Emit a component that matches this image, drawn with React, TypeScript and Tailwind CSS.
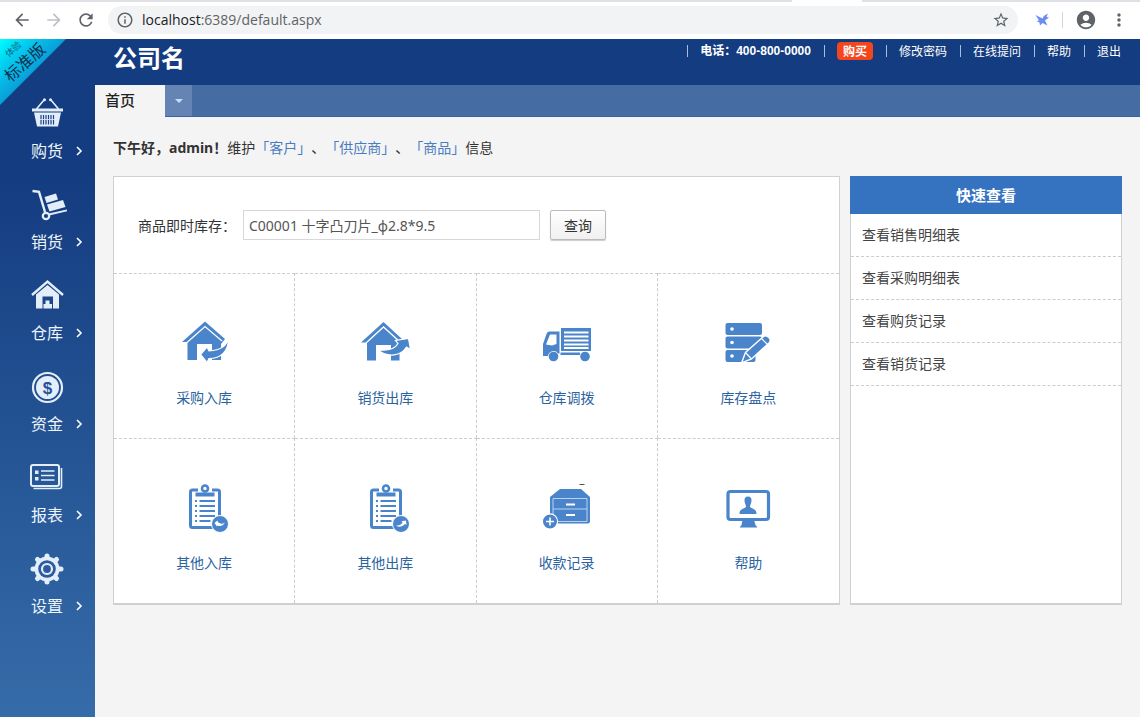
import React, { useState } from "react";

// Icons
import {
  MdArrowBack,
  MdArrowForward,
  MdRefresh,
  MdInfoOutline,
  MdStarBorder,
  MdAccountCircle,
  MdMoreVert,
} from "react-icons/md";

const BasketIcon = () => (
  <svg viewBox="0 0 40 36" className="w-10 h-9">
    <path d="M9.5 14 17 5M31.5 14 24 5" stroke="#e4eefb" strokeWidth="1.6" />
    <circle cx="17.5" cy="4.8" r="1.5" fill="#e4eefb" />
    <circle cx="23.5" cy="4.8" r="1.5" fill="#e4eefb" />
    <path d="M5 13.5h31v3H5zM7 17.5h27l-3 14H10z" fill="#e4eefb" />
    <path
      d="M14 20v9.500M16.500 20v9.500M19 20v9.500M21.500 20v9.500M24 20v9.500M26.500 20v9.500"
      stroke="#1b438a"
      strokeWidth="1.200"
    />
    <path d="M12.500 24.500h15.500" stroke="#e4eefb" strokeWidth="0.800" />
  </svg>
);

const TrolleyIcon = () => (
  <svg viewBox="0 0 40 36" className="w-10 h-9">
    <path d="M5.500 5 12 5.800 18 26" fill="none" stroke="#e4eefb" strokeWidth="2.400" />
    <path d="M22 28.500 40 24.300" stroke="#e4eefb" strokeWidth="1.800" />
    <circle cx="19" cy="30" r="3.200" fill="none" stroke="#e4eefb" strokeWidth="2.200" />
    <path d="m17.500 11 11.500-3.500 2 6-11.500 3.500z" fill="#e4eefb" />
    <path d="m20 18.500 16-4.500 2.500 7-16 4.500z" fill="#e4eefb" />
  </svg>
);

const WarehouseIcon = () => (
  <svg viewBox="0 0 40 36" className="w-10 h-9">
    <path d="M5 18 20.500 4.500 36 18" fill="none" stroke="#e4eefb" strokeWidth="2.400" />
    <path
      d="M9 17.500 20.500 8 32 17.500V31.500H26V19.500H15.500V31.500H9z"
      fill="#e4eefb"
    />
    <path d="M18.500 23.500h4v3.500h2.500v4.500h-8.500v-4.500h2z" fill="#e4eefb" />
  </svg>
);

const CoinIcon = () => (
  <svg viewBox="0 0 40 36" className="w-10 h-9">
    <circle cx="20.500" cy="19.500" r="14.500" fill="none" stroke="#e4eefb" strokeWidth="2.200" />
    <circle cx="20.500" cy="19.500" r="11.500" fill="#e4eefb" />
    <text
      x="20.500"
      y="25.500"
      textAnchor="middle"
      fill="#24529a"
      className="font-['Liberation_Sans',sans-serif] text-[17px] font-bold"
    >
      $
    </text>
  </svg>
);

const ReportIcon = () => (
  <svg viewBox="0 0 40 36" className="w-10 h-9">
    <path d="M34.500 9v18.500a2 2 0 0 1-2 2H6.500" fill="none" stroke="#e4eefb" strokeWidth="1.600" />
    <rect x="4" y="6" width="28" height="21" rx="2" fill="none" stroke="#e4eefb" strokeWidth="2" />
    <path d="M8 11.500h3.500V15H8zM8 18h3.500v3.500H8z" fill="#e4eefb" />
    <path
      d="M14 12h13.500M14 16.500h13.500M14 21h13.500"
      stroke="#e4eefb"
      strokeWidth="1.300"
    />
  </svg>
);

const GearIcon = () => (
  <svg viewBox="0 0 40 36" className="w-10 h-9">
    <g stroke="#e4eefb" strokeWidth="5" strokeLinecap="round">
      <path d="M20 6v26M6 19h28M10.500 9.500l19 19M29.500 9.500l-19 19" />
    </g>
    <circle cx="20" cy="19" r="12.500" fill="#e4eefb" />
    <circle cx="20" cy="19" r="8.800" fill="#2c5c9f" />
    <circle cx="20" cy="19" r="5" fill="none" stroke="#e4eefb" strokeWidth="2.200" />
  </svg>
);

const HouseInIcon = () => (
  <svg viewBox="0 0 52 50" className="w-[52px] h-[50px]">
    <path d="M4 24 27 3.500 47 21 43 26V42H34V26H19V42H9.500V24z" fill="#4a84cb" />
    <path d="M9 24.500 27 8.500 44 23" fill="none" stroke="#fff" strokeWidth="1.300" />
    <path
      d="M50.500 19.500C49 29 41 32.500 31 33L29 29 22.500 36.500 29 44.500 31 40.500C43 40.500 51 33 50.500 19.500z"
      fill="#4a84cb"
      stroke="#fff"
      strokeWidth="1.200"
    />
  </svg>
);

const HouseOutIcon = () => (
  <svg viewBox="0 0 52 50" className="w-[52px] h-[50px]">
    <path d="M2 24.500 24.500 4 43 21 40.500 26V42.500H32V27H17V42.500H8V24.500z" fill="#4a84cb" />
    <path d="M7 25 24.500 9 41 24" fill="none" stroke="#fff" strokeWidth="1.300" />
    <path
      d="M19 32C29 33 36 31 39 25.500L36.500 22.500 49.500 20.500 51.500 31.500 47.500 29C42 38 29 40 19 32z"
      fill="#4a84cb"
      stroke="#fff"
      strokeWidth="1.200"
    />
  </svg>
);

const TruckIcon = () => (
  <svg viewBox="0 0 52 50" className="w-[52px] h-[50px]">
    <rect x="20" y="10" width="30" height="23" fill="#4a84cb" />
    <path
      d="M23 14.500h24.500M23 18.500h24.500M23 22.500h24.500M23 26.500h24.500M23 30h24.500"
      stroke="#fff"
      strokeWidth="2"
    />
    <path d="M8 13.500H18.500V35.500H17A5.500 5.500 0 0 0 7 38H2V26L5.500 16Q6.200 13.500 8 13.500z" fill="#4a84cb" />
    <path d="M9 16.500H15.500V26L11 27.500 5 26.500z" fill="#fff" />
    <path d="M19.500 34.500h19.500v2.500h-19.500z" fill="#4a84cb" />
    <circle cx="12.500" cy="38.500" r="4.800" fill="#4a84cb" />
    <circle cx="44" cy="38.500" r="4.800" fill="#4a84cb" />
  </svg>
);

const StockIcon = () => (
  <svg viewBox="0 0 52 50" className="w-[52px] h-[50px]">
    <g fill="#4a84cb">
      <rect x="3.500" y="5" width="36.500" height="12" rx="2" />
      <rect x="3.500" y="18.500" width="36.500" height="12" rx="2" />
      <rect x="3.500" y="32" width="30" height="12" rx="2" />
    </g>
    <g fill="#fff">
      <circle cx="10" cy="11" r="1.800" />
      <circle cx="10" cy="24.500" r="1.800" />
      <circle cx="10" cy="38" r="1.800" />
    </g>
    <path
      d="M19.500 45 23.500 34.500 41.500 18.500Q44 16.500 47 19.500 49.500 22.500 47 25L29.500 41z"
      fill="#4a84cb"
      stroke="#fff"
      strokeWidth="1.400"
    />
    <path d="M23.500 34.500 29.500 41M39.500 20.500 45.500 26.500" stroke="#fff" strokeWidth="1.200" />
  </svg>
);

const Clipboard: React.FC<{ children: React.ReactNode }> = ({ children }) => (
  <svg viewBox="0 0 52 50" className="w-[52px] h-[50px]">
    <path
      d="M20 7H14.500Q12.500 7 12.500 9V42.500Q12.500 44.500 14.500 44.500H39.500Q41.500 44.500 41.500 42.500V9Q41.500 7 39.500 7H34"
      fill="none"
      stroke="#4a84cb"
      strokeWidth="3"
    />
    <circle cx="27" cy="5.500" r="3" fill="none" stroke="#4a84cb" strokeWidth="2.600" />
    <path d="M17.500 9.500h19v4h-19z" fill="#4a84cb" />
    <path
      d="M21.500 18h15.500M21.500 23h15.500M21.500 28h15.500M21.500 33h15.500M21.500 38h11"
      stroke="#4a84cb"
      strokeWidth="1.800"
    />
    <path
      d="M17 18h2M17 23h2M17 28h2M17 33h2M17 38h2"
      stroke="#4a84cb"
      strokeWidth="1.800"
    />
    <circle cx="42" cy="41" r="8.500" fill="#4a84cb" stroke="#fff" strokeWidth="1" />
    {children}
  </svg>
);

const ClipInIcon = () => (
  <Clipboard>
    <path d="M36.500 40 39.500 37.500 40 39.300Q43.500 42 47 39.500 44 44.500 39.500 42.500L39 43.500z" fill="#fff" />
  </Clipboard>
);

const ClipOutIcon = () => (
  <Clipboard>
    <path d="M37 42.500Q41.500 43 43.500 39.500L42.500 38.300 47 37.500 47.500 42 46 41Q42 45.500 37 42.500z" fill="#fff" />
  </Clipboard>
);

const CabinetIcon = () => (
  <svg viewBox="0 0 52 50" className="w-[52px] h-[50px]">
    <path d="M19 6H40L49 14V38.500Q49 40.500 47 40.500H11Q9 40.500 9 38.500V14z" fill="#4a84cb" />
    <path
      d="M12 15.500H46V38.500H12zM12 26H46"
      fill="none"
      stroke="#b9d2ef"
      strokeWidth="1"
    />
    <path d="M25 21.500h9M25 32h9" stroke="#fff" strokeWidth="2" />
    <path d="M38.500 1.500h5" stroke="#555" strokeWidth="1" />
    <circle cx="9" cy="38.500" r="7.600" fill="#4a84cb" stroke="#fff" strokeWidth="1.200" />
    <path d="M5 38.500h8M9 34.500v8" stroke="#fff" strokeWidth="1.600" />
  </svg>
);

const MonitorIcon = () => (
  <svg viewBox="0 0 52 50" className="w-[52px] h-[50px]">
    <rect x="6" y="8.500" width="40.500" height="28" rx="2.500" fill="none" stroke="#4a84cb" strokeWidth="3.200" />
    <path d="M20.500 37h11.500l1.500 5 2 2.500H17.500l2-2.500z" fill="#4a84cb" />
    <path
      d="M26 13.500C29 13.500 30 16 29.300 19 29 21 28 22 28 24 30 26 34.500 25.500 34.500 31H17.500C17.500 25.500 22 26 24 24 24 22 23 21 22.700 19 22 16 23 13.500 26 13.500z"
      fill="#4a84cb"
    />
  </svg>
);

const BirdIcon = () => (
  <svg viewBox="0 0 16 16" className="w-4 h-4">
    <path
      d="M1.500 3 8.500 6.500Q10 3 14 1.500L12.500 5 15 5.500 11 8.500 13.500 13.500 8.500 11 6 13.500 5.500 10.500 2.500 9 5 8.500z"
      fill="#6b8cf5"
    />
  </svg>
);

const menu = [
  { name: "购货", icon: <BasketIcon /> },
  { name: "销货", icon: <TrolleyIcon /> },
  { name: "仓库", icon: <WarehouseIcon /> },
  { name: "资金", icon: <CoinIcon /> },
  { name: "报表", icon: <ReportIcon /> },
  { name: "设置", icon: <GearIcon /> },
];

const tiles = [
  { name: "采购入库", icon: <HouseInIcon /> },
  { name: "销货出库", icon: <HouseOutIcon /> },
  { name: "仓库调拨", icon: <TruckIcon /> },
  { name: "库存盘点", icon: <StockIcon /> },
  { name: "其他入库", icon: <ClipInIcon /> },
  { name: "其他出库", icon: <ClipOutIcon /> },
  { name: "收款记录", icon: <CabinetIcon /> },
  { name: "帮助", icon: <MonitorIcon /> },
];

const quickLinks = ["查看销售明细表", "查看采购明细表", "查看购货记录", "查看销货记录"];

const BrowserBar = () => (
  <div className="bg-white">
    <div className="h-0.5 bg-[#dee1e6] flex justify-end">
      <div className="w-[70px] mr-[278px] bg-white"></div>
    </div>
    <div className="h-[37px] pb-px flex items-center text-[#5f6368]">
      <button aria-label="Back" className="ml-3">
        <MdArrowBack size={20} />
      </button>
      <button aria-label="Forward" className="ml-3 text-[#bdc1c6]">
        <MdArrowForward size={20} />
      </button>
      <button aria-label="Reload" className="ml-3">
        <MdRefresh size={20} />
      </button>
      <div className="flex-1 h-7 ml-3 px-2 rounded-full bg-[#f1f3f4] flex items-center">
        <MdInfoOutline size={18} />
        <p className="flex-1 ml-2 text-sm font-['Open_Sans',sans-serif]">
          <span className="text-[#202124]">localhost</span>:6389/default.aspx
        </p>
        <MdStarBorder size={18} />
      </div>
      <button aria-label="Extension" className="ml-4">
        <BirdIcon />
      </button>
      <span className="w-px h-4 ml-3 bg-[#d0d3d7]"></span>
      <button aria-label="Profile" className="ml-3">
        <MdAccountCircle size={22} />
      </button>
      <button aria-label="Menu" className="ml-3 mr-[11px]">
        <MdMoreVert size={20} />
      </button>
    </div>
  </div>
);

const Sidebar = () => (
  <nav className="relative w-[95px] shrink-0 pt-14 bg-linear-to-b from-[#143c80] from-20% to-[#366ca9]">
    {/* ribbon */}
    <div className="absolute top-0 left-0 w-[66px] h-[66px] [clip-path:polygon(0_0,100%_0,0_100%)] bg-linear-to-br from-[#0ff] via-[#05c8ee] via-25% to-[#0a9fd8] to-50%"></div>
    <p className="absolute top-0.5 -left-1 -rotate-42 text-center text-base leading-5 whitespace-nowrap text-[#12304f]">
      <small className="block text-[9px] leading-3 opacity-70">体验</small>
      标准版
    </p>
    <ul>
      {menu.map((item) => (
        <li key={item.name} className="h-[91px]">
          <button className="w-full text-left text-[#eef4fc]">
            <span className="block pl-[27px]">{item.icon}</span>
            <span className="flex items-center mt-[7px] pl-[31px] text-base leading-6">
              {item.name}
              <svg viewBox="0 0 8 10" className="w-2 h-2.5 ml-3 mt-0.5">
                <path d="m2 1 4 4-4 4" fill="none" stroke="#fff" strokeWidth="1.600" />
              </svg>
            </span>
          </button>
        </li>
      ))}
    </ul>
  </nav>
);

const Header = () => (
  <header className="h-[46px] pl-[18px] flex justify-between bg-[#143c80] text-white">
    <h1 className="text-2xl leading-9 font-bold">公司名</h1>
    <ul className="flex h-6 pr-1.5 items-center text-xs leading-3 *:border-l *:border-[#a9bddd] *:pl-3 *:pr-[13px]">
      <li className="font-bold font-['Liberation_Sans','Noto_Sans_CJK_SC',sans-serif]">
        电话：400-800-0000
      </li>
      <li className="h-3 flex items-center">
        <a href="#" className="px-1.5 py-[3px] rounded-sm bg-[#f4461d] font-bold">
          购买
        </a>
      </li>
      <li>
        <a href="#">修改密码</a>
      </li>
      <li>
        <a href="#">在线提问</a>
      </li>
      <li>
        <a href="#">帮助</a>
      </li>
      <li>
        <a href="#">退出</a>
      </li>
    </ul>
  </header>
);

const App: React.FC = () => {
  const [keyword, setKeyword] = useState("C00001 十字凸刀片_φ2.8*9.5");

  return (
    <div className="min-h-screen flex flex-col bg-[#f4f4f4] text-sm text-[#333] font-['Noto_Sans_CJK_SC',sans-serif] [text-spacing-trim:space-all]">
      <BrowserBar />
      <div className="flex flex-1">
        <Sidebar />
        <div className="flex-1 min-w-0">
          <Header />
          {/* tabs */}
          <div className="h-8 flex bg-[#456da3] border-b border-[#3d62a0]">
            <button className="w-[70px] h-8 pl-2.5 pb-0.5 text-left text-[15px] font-medium bg-[#f4f4f4] text-[#222]">
              首页
            </button>
            <button aria-label="更多" className="w-[27px] flex justify-center items-center bg-[#6584b3]">
              <svg viewBox="0 0 8 4" className="w-2 h-1">
                <path d="M0 0h8l-4 4z" fill="#bfe0ff" />
              </svg>
            </button>
          </div>
          <main className="px-[18px] pt-[19px]">
            <p className="mb-[17px] leading-[22px]">
              <b className="font-['Noto_Sans','Noto_Sans_CJK_SC',sans-serif]">下午好，admin！</b>
              维护
              <a href="#" className="text-[#4a7cc0]">「客户」</a>、
              <a href="#" className="text-[#4a7cc0]">「供应商」</a>、
              <a href="#" className="text-[#4a7cc0]">「商品」</a>
              信息
            </p>
            <div className="flex gap-2.5">
              <section className="flex-1 bg-white border border-b-2 border-[#d0d0d0]">
                <form
                  className="h-24 flex items-center pl-6"
                  onSubmit={(e) => e.preventDefault()}
                >
                  <label htmlFor="stock" className="mr-[7px]">
                    商品即时库存：
                  </label>
                  <input
                    id="stock"
                    value={keyword}
                    onChange={(e) => setKeyword(e.target.value)}
                    className="w-[297px] h-[30px] px-[5px] border border-[#d8d8d8] text-[#555] outline-none font-['Noto_Sans','Noto_Sans_CJK_SC',sans-serif]"
                  />
                  <button className="w-14 h-[30px] ml-2.5 border border-[#bbb] rounded-xs shadow-[0_1px_1px_#ccc] bg-linear-to-b from-white to-[#f0f0f0]">
                    查询
                  </button>
                </form>
                <div className="grid grid-cols-4">
                  {tiles.map((tile) => (
                    <a
                      key={tile.name}
                      href="#"
                      className="h-[165px] pt-11 flex flex-col items-center gap-[19px] leading-5 text-[#2b639f] border-t border-r border-dashed border-[#ccc] nth-[4n]:border-r-0"
                    >
                      {tile.icon}
                      {tile.name}
                    </a>
                  ))}
                </div>
              </section>
              <aside className="w-[272px] bg-white border border-b-2 border-[#d0d0d0] border-t-0">
                <h2 className="-mx-px h-[38px] leading-[38px] text-center text-[15px] font-bold text-white bg-[#3572c0]">
                  快速查看
                </h2>
                <ul>
                  {quickLinks.map((link) => (
                    <li key={link} className="border-b border-dashed border-[#ccc]">
                      <a href="#" className="block pl-[11px] pb-0.5 leading-10 text-[#444]">
                        {link}
                      </a>
                    </li>
                  ))}
                </ul>
              </aside>
            </div>
          </main>
        </div>
      </div>
    </div>
  );
};

export default App;
